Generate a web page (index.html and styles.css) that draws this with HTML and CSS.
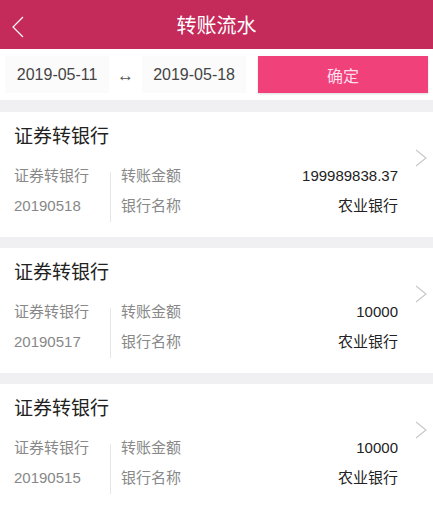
FILE: index.html
```html
<!DOCTYPE html>
<html lang="zh-CN">
<head>
  <meta charset="UTF-8">
  <meta name="viewport" content="width=device-width, initial-scale=1.0">
  <title>转账流水</title>
  <link rel="stylesheet" href="styles.css">
</head>
<body>
  <header class="topbar">
    <svg class="back" width="14" height="24" viewBox="0 0 14 24"><path d="M12 2 L2 12 L12 22" fill="none" stroke="#fff" stroke-width="1.2"/></svg>
    <h1>转账流水</h1>
  </header>

  <div class="filter">
    <div class="date">2019-05-11</div>
    <div class="sep">↔</div>
    <div class="date">2019-05-18</div>
    <button class="ok">确定</button>
  </div>

  <div class="list">
    <div class="card">
      <div class="card-title">证券转银行</div>
      <div class="card-body">
        <div class="left">
          <div>证券转银行</div>
          <div>20190518</div>
        </div>
        <div class="right">
          <div class="row"><span class="label">转账金额</span><span class="value">199989838.37</span></div>
          <div class="row"><span class="label">银行名称</span><span class="value">农业银行</span></div>
        </div>
      </div>
      <svg class="more" width="12" height="18" viewBox="0 0 12 18"><path d="M1 1 L11 9 L1 17" fill="none" stroke="#c8c8c8" stroke-width="1.2"/></svg>
    </div>

    <div class="card">
      <div class="card-title">证券转银行</div>
      <div class="card-body">
        <div class="left">
          <div>证券转银行</div>
          <div>20190517</div>
        </div>
        <div class="right">
          <div class="row"><span class="label">转账金额</span><span class="value">10000</span></div>
          <div class="row"><span class="label">银行名称</span><span class="value">农业银行</span></div>
        </div>
      </div>
      <svg class="more" width="12" height="18" viewBox="0 0 12 18"><path d="M1 1 L11 9 L1 17" fill="none" stroke="#c8c8c8" stroke-width="1.2"/></svg>
    </div>

    <div class="card">
      <div class="card-title">证券转银行</div>
      <div class="card-body">
        <div class="left">
          <div>证券转银行</div>
          <div>20190515</div>
        </div>
        <div class="right">
          <div class="row"><span class="label">转账金额</span><span class="value">10000</span></div>
          <div class="row"><span class="label">银行名称</span><span class="value">农业银行</span></div>
        </div>
      </div>
      <svg class="more" width="12" height="18" viewBox="0 0 12 18"><path d="M1 1 L11 9 L1 17" fill="none" stroke="#c8c8c8" stroke-width="1.2"/></svg>
    </div>
  </div>
</body>
</html>
```

FILE: styles.css
```css
* {
  box-sizing: border-box;
}
body {
  margin: 0;
  font-family: 'Liberation Sans', 'Noto Sans CJK SC', sans-serif;
  background: #f0f0f2;
  color: #222;
}
.topbar {
  height: 49px;
  background: #c42a5a;
  display: flex;
  align-items: center;
  justify-content: center;
  position: relative;
}
.topbar h1 {
  margin: 0;
  font-size: 20px;
  font-weight: normal;
  color: #fff;
}
.back {
  position: absolute;
  left: 11px;
  top: 15px;
}
.filter {
  height: 51px;
  background: #fff;
  display: flex;
  align-items: center;
  padding: 0 5px;
}
.date {
  width: 105px;
  height: 37px;
  background: #fbfbfb;
  font-size: 16px;
  color: #444;
  display: flex;
  align-items: center;
  justify-content: center;
}
.sep {
  width: 33px;
  text-align: center;
  font-size: 17px;
  color: #555;
  padding-top: 3px;
}
.ok {
  margin-left: 12px;
  width: 171px;
  height: 37px;
  border: none;
  background: #f0417a;
  color: #fde;
  font-size: 16px;
  font-family: inherit;
  box-shadow: 0 1px 2px rgba(0,0,0,0.15);
}
.list {
  padding-top: 12px;
  display: flex;
  flex-direction: column;
  gap: 11px;
}
.card {
  background: #fff;
  height: 125px;
  padding: 13px 35px 0 14px;
  position: relative;
}
.card-title {
  font-size: 19px;
  line-height: 24px;
}
.card-body {
  display: flex;
  margin-top: 17px;
}
.left {
  width: 96px;
  font-size: 15px;
  color: #888;
  display: flex;
  flex-direction: column;
  gap: 10px;
  line-height: 20px;
}
.right {
  flex: 1;
  border-left: 1px solid #e6e6e6;
  padding-left: 10px;
  display: flex;
  flex-direction: column;
  gap: 10px;
  margin-top: 6px;
  margin-bottom: -6px;
}
.row {
  display: flex;
  justify-content: space-between;
  font-size: 15px;
  line-height: 20px;
  margin-top: -6px;
}
.row + .row {
  margin-top: 0;
}
.label {
  color: #888;
}
.value {
  color: #222;
}
.more {
  position: absolute;
  right: 6px;
  top: 37px;
}
```
